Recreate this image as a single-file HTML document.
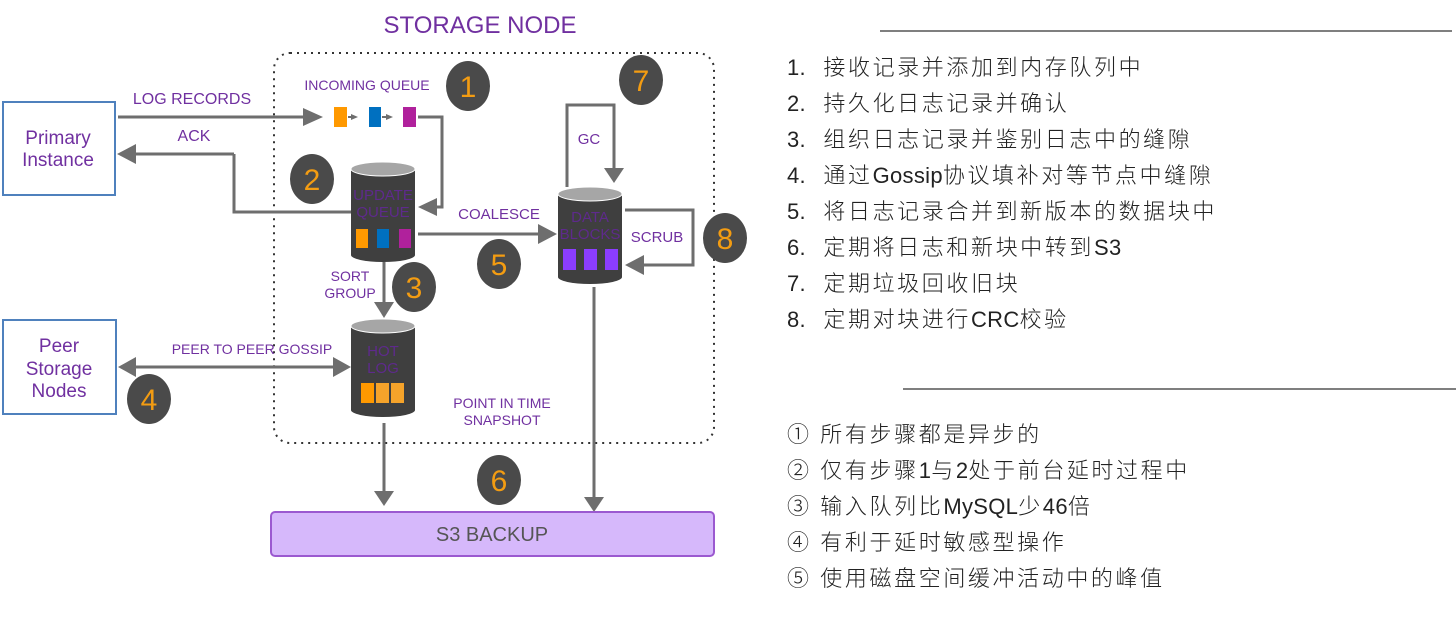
<!DOCTYPE html>
<html><head><meta charset="utf-8"><style>
html,body{margin:0;padding:0;background:#fff;width:1456px;height:622px;overflow:hidden}
svg{position:absolute;left:0;top:0}
.t{font-family:"Liberation Sans","DejaVu Sans",sans-serif;fill:#7030a0}
.c{font-family:"Liberation Sans",sans-serif;fill:#5e2a8c;font-size:15px;text-anchor:middle}
.n{font-family:"Liberation Sans",sans-serif;font-size:30px;fill:#f39c12;text-anchor:middle}
.list{position:absolute;font-family:"Liberation Sans","Noto Sans CJK SC",sans-serif;font-weight:300;font-size:22px;color:#222;letter-spacing:2.6px;white-space:nowrap;line-height:36px}
.l{letter-spacing:0.3px}
</style></head><body>
<svg width="1456" height="622" viewBox="0 0 1456 622">
<text x="480" y="33" class="t" font-size="24" text-anchor="middle">STORAGE NODE</text>
<rect x="274" y="53" width="440" height="390" rx="16" fill="none" stroke="#333" stroke-width="2" stroke-dasharray="2,5"/>
<rect x="3" y="102" width="112" height="93" fill="#fff" stroke="#4f81bd" stroke-width="2"/>
<text x="58" y="144" class="t" font-size="19" text-anchor="middle">Primary</text>
<text x="58" y="166" class="t" font-size="19" text-anchor="middle">Instance</text>
<rect x="3" y="320" width="113" height="94" fill="#fff" stroke="#4f81bd" stroke-width="2"/>
<text x="59" y="352" class="t" font-size="19" text-anchor="middle">Peer</text>
<text x="59" y="375" class="t" font-size="19" text-anchor="middle">Storage</text>
<text x="59" y="397" class="t" font-size="19" text-anchor="middle">Nodes</text>
<g stroke="#6e6e6e" stroke-width="3" fill="none">
<line x1="118" y1="117" x2="305" y2="117"/>
<polyline points="234,154 234,212 352,212"/>
<line x1="134" y1="154" x2="234" y2="154"/>
<polyline points="418,117 442,117 442,207 434,207"/>
<line x1="418" y1="234" x2="540" y2="234"/>
<polyline points="567,187 567,105 614,105 614,170"/>
<polyline points="625,210 693,210 693,265 640,265"/>
<line x1="384" y1="262" x2="384" y2="304"/>
<line x1="134" y1="367" x2="335" y2="367"/>
<line x1="384" y1="423" x2="384" y2="492"/>
<line x1="594" y1="287" x2="594" y2="498"/>
</g>
<g fill="#6e6e6e">
<path d="M303,108L323,117L303,126z"/>
<path d="M136,144L117,154L136,164z"/>
<path d="M437,198L418,207L437,216z"/>
<path d="M538,224L557,234L538,244z"/>
<path d="M604,168L614,183L624,168z"/>
<path d="M644,255L625,265L644,275z"/>
<path d="M374,302L384,318L394,302z"/>
<path d="M136,357L118,367L136,377z"/>
<path d="M333,357L351,367L333,377z"/>
<path d="M374,491L384,506L394,491z"/>
<path d="M584,497L594,512L604,497z"/>
<path d="M351,114L358,117L351,120z"/><path d="M386,114L393,117L386,120z"/>
</g>
<line x1="348" y1="117" x2="353" y2="117" stroke="#6e6e6e" stroke-width="2"/>
<line x1="382" y1="117" x2="388" y2="117" stroke="#6e6e6e" stroke-width="2"/>
<rect x="334" y="107" width="13" height="20" fill="#ff9900"/>
<rect x="369" y="107" width="12" height="20" fill="#0070c0"/>
<rect x="403" y="107" width="13" height="20" fill="#b0219c"/>
<text x="367" y="90" class="t" font-size="14" text-anchor="middle">INCOMING QUEUE</text>
<text x="192" y="104" class="t" font-size="16" text-anchor="middle">LOG RECORDS</text>
<text x="194" y="141" class="t" font-size="16" text-anchor="middle">ACK</text>
<text x="499" y="219" class="t" font-size="15" text-anchor="middle">COALESCE</text>
<text x="589" y="144" class="t" font-size="15" text-anchor="middle">GC</text>
<text x="657" y="242" class="t" font-size="15" text-anchor="middle">SCRUB</text>
<text x="350" y="281" class="t" font-size="14" text-anchor="middle">SORT</text>
<text x="350" y="298" class="t" font-size="14" text-anchor="middle">GROUP</text>
<text x="252" y="354" class="t" font-size="14" text-anchor="middle">PEER TO PEER GOSSIP</text>
<text x="502" y="408" class="t" font-size="14" text-anchor="middle">POINT IN TIME</text>
<text x="502" y="425" class="t" font-size="14" text-anchor="middle">SNAPSHOT</text>
<g>
<path d="M351,169V255A32,7 0 0 0 415,255V169z" fill="#3f3f3f"/>
<ellipse cx="383" cy="169" rx="32" ry="7" fill="#a6a6a6" stroke="#fff" stroke-width="1"/>
<text x="383" y="200" class="c">UPDATE</text>
<text x="383" y="217" class="c">QUEUE</text>
<rect x="356" y="229" width="12" height="19" fill="#ff9900"/><rect x="377" y="229" width="12" height="19" fill="#0070c0"/><rect x="399" y="229" width="12" height="19" fill="#b0219c"/>
</g>
<g>
<path d="M558,194V277A32,7 0 0 0 622,277V194z" fill="#3f3f3f"/>
<ellipse cx="590" cy="194" rx="32" ry="7" fill="#a6a6a6" stroke="#fff"/>
<text x="590" y="222" class="c">DATA</text>
<text x="590" y="239" class="c">BLOCKS</text>
<rect x="563" y="249" width="13" height="21" fill="#8b3dff"/><rect x="584" y="249" width="13" height="21" fill="#8b3dff"/><rect x="605" y="249" width="13" height="21" fill="#8b3dff"/>
</g>
<g>
<path d="M351,326V410A32,7 0 0 0 415,410V326z" fill="#3f3f3f"/>
<ellipse cx="383" cy="326" rx="32" ry="7" fill="#a6a6a6" stroke="#fff"/>
<text x="383" y="356" class="c">HOT</text>
<text x="383" y="373" class="c">LOG</text>
<rect x="361" y="383" width="13" height="20" fill="#ff9900"/><rect x="376" y="383" width="13" height="20" fill="#f5a32a"/><rect x="391" y="383" width="13" height="20" fill="#f5a32a"/>
</g>
<g fill="#4a4a4a">
<ellipse cx="468" cy="86" rx="22" ry="25"/><ellipse cx="312" cy="179" rx="22" ry="25"/>
<ellipse cx="414" cy="287" rx="22" ry="25"/><ellipse cx="149" cy="399" rx="22" ry="25"/>
<ellipse cx="499" cy="264" rx="22" ry="25"/><ellipse cx="499" cy="480" rx="22" ry="25"/>
<ellipse cx="641" cy="80" rx="22" ry="25"/><ellipse cx="725" cy="238" rx="22" ry="25"/>
</g>
<text x="468" y="97" class="n">1</text><text x="312" y="190" class="n">2</text>
<text x="414" y="298" class="n">3</text><text x="149" y="410" class="n">4</text>
<text x="499" y="275" class="n">5</text><text x="499" y="491" class="n">6</text>
<text x="641" y="91" class="n">7</text><text x="725" y="249" class="n">8</text>
<rect x="271" y="512" width="443" height="44" rx="4" fill="#d6b8fb" stroke="#9b59d0" stroke-width="2"/>
<text x="492" y="541" font-family="Liberation Sans,sans-serif" font-size="20" fill="#555" text-anchor="middle">S3 BACKUP</text>
<line x1="880" y1="31" x2="1452" y2="31" stroke="#555" stroke-width="1.5"/>
<line x1="903" y1="389" x2="1456" y2="389" stroke="#555" stroke-width="1.5"/>
</svg>
<div class="list" style="left:787px;top:50px">
<span class="l">1.</span>&nbsp;&nbsp;接收记录并添加到内存队列中<br>
<span class="l">2.</span>&nbsp;&nbsp;持久化日志记录并确认<br>
<span class="l">3.</span>&nbsp;&nbsp;组织日志记录并鉴别日志中的缝隙<br>
<span class="l">4.</span>&nbsp;&nbsp;通过<span class="l">Gossip</span>协议填补对等节点中缝隙<br>
<span class="l">5.</span>&nbsp;&nbsp;将日志记录合并到新版本的数据块中<br>
<span class="l">6.</span>&nbsp;&nbsp;定期将日志和新块中转到<span class="l">S3</span><br>
<span class="l">7.</span>&nbsp;&nbsp;定期垃圾回收旧块<br>
<span class="l">8.</span>&nbsp;&nbsp;定期对块进行<span class="l">CRC</span>校验
</div>
<div class="list" style="left:787px;top:417px">
①&nbsp;所有步骤都是异步的<br>
②&nbsp;仅有步骤<span class="l">1</span>与<span class="l">2</span>处于前台延时过程中<br>
③&nbsp;输入队列比<span class="l">MySQL</span>少<span class="l">46</span>倍<br>
④&nbsp;有利于延时敏感型操作<br>
⑤&nbsp;使用磁盘空间缓冲活动中的峰值
</div>
</body></html>
